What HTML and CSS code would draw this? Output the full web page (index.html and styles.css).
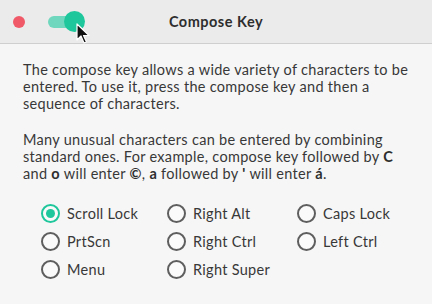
FILE: index.html
```html
<!DOCTYPE html>
<html>
<head>
<meta charset="utf-8">
<link rel="stylesheet" href="styles.css">
</head>
<body>
<div class="window">
  <header class="titlebar">
    <div class="controls">
      <span class="close-dot"></span>
      <span class="toggle"><span class="track"></span><span class="knob"></span></span>
    </div>
    <div class="title">Compose Key</div>
    <svg class="cursor" width="14" height="22" viewBox="0 0 14 22"><path d="M1 1 L1 17 L5 13 L8 20 L10.5 19 L7.5 12.5 L13 12.5 Z" fill="#111" stroke="#fff" stroke-width="1.2" stroke-linejoin="round"/></svg>
  </header>
  <main class="content">
    <p>The compose key allows a wide variety of characters to be<br>entered. To use it, press the compose key and then a<br>sequence of characters.</p>
    <p>Many unusual characters can be entered by combining<br>standard ones. For example, compose key followed by <b>C</b><br>and <b>o</b> will enter <b>©</b>, <b>a</b> followed by <b>'</b> will enter <b>á</b>.</p>
    <div class="options">
      <label class="opt"><span class="radio checked"></span>Scroll Lock</label>
      <label class="opt"><span class="radio"></span>Right Alt</label>
      <label class="opt"><span class="radio"></span>Caps Lock</label>
      <label class="opt"><span class="radio"></span>PrtScn</label>
      <label class="opt"><span class="radio"></span>Right Ctrl</label>
      <label class="opt"><span class="radio"></span>Left Ctrl</label>
      <label class="opt"><span class="radio"></span>Menu</label>
      <label class="opt"><span class="radio"></span>Right Super</label>
    </div>
  </main>
</div>
</body>
</html>
```
FILE: styles.css
```css
* { box-sizing: border-box; }
html, body { margin: 0; padding: 0; }
body {
  width: 432px;
  height: 304px;
  overflow: hidden;
  background: #f6f6f6;
  font-family: Lato, "Noto Sans", sans-serif;
  color: #383838;
}
.window { width: 432px; height: 304px; }
.titlebar {
  position: relative;
  height: 44px;
  background: #ebebeb;
  border-bottom: 1px solid #cfcfcf;
  display: flex;
  align-items: center;
  justify-content: center;
}
.controls {
  position: absolute;
  left: 13px;
  top: 11px;
  display: flex;
  align-items: center;
  gap: 23px;
  height: 22px;
}
.close-dot {
  width: 12px;
  height: 12px;
  border-radius: 50%;
  background: #f05a68;
}
.toggle {
  position: relative;
  width: 38px;
  height: 22px;
  display: block;
}
.track {
  position: absolute;
  left: 0;
  top: 5px;
  width: 32px;
  height: 12px;
  border-radius: 6px;
  background: #6fd7bd;
}
.knob {
  position: absolute;
  left: 16px;
  top: 0;
  width: 21px;
  height: 21px;
  border-radius: 50%;
  background: #1fc79c;
}
.cursor {
  position: absolute;
  left: 76px;
  top: 23px;
}
.title {
  font-weight: bold;
  font-size: 14.5px;
  letter-spacing: 0.5px;
  color: #2e2e2e;
}
.content {
  padding: 17px 23px 0 23px;
}
.content p {
  margin: 0 0 19px 0;
  font-size: 14.5px;
  line-height: 17px;
  letter-spacing: 0.3px;
  white-space: nowrap;
}
.content b { font-weight: bold; color: #2e2e2e; }
.options {
  display: grid;
  grid-template-columns: 126px 130px auto;
  row-gap: 9px;
  padding-left: 18px;
  margin-top: 22px;
}
.opt {
  display: flex;
  align-items: center;
  gap: 7px;
  font-size: 14.5px;
  letter-spacing: 0.3px;
  height: 19px;
}
.radio {
  width: 19px;
  height: 19px;
  border-radius: 50%;
  border: 2px solid #5e5e5e;
  background: #fafafa;
  display: flex;
  align-items: center;
  justify-content: center;
}
.radio.checked {
  border-color: #1fc79c;
}
.radio.checked::after {
  content: "";
  width: 9px;
  height: 9px;
  border-radius: 50%;
  background: #1fc79c;
}
```
